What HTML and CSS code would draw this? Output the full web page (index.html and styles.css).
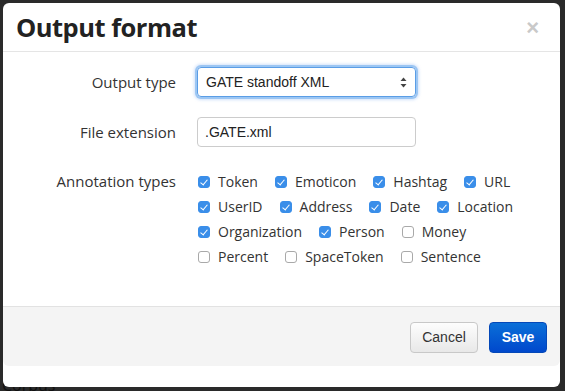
FILE: index.html
```html
<!DOCTYPE html>
<html>
<head>
<meta charset="utf-8">
<link rel="stylesheet" href="styles.css">
</head>
<body>
<div class="backdrop-text">Corpus</div>
<div class="modal">
  <div class="modal-header">
    <h3 class="title">Output format</h3>
    <span class="close">×</span>
  </div>
  <div class="modal-body">
    <div class="form">
      <label class="label">Output type</label>
      <div class="select">
        <span>GATE standoff XML</span>
        <svg class="arrows" width="7" height="11" viewBox="0 0 7 11"><path d="M3.5 0.5 L6.5 4 L0.5 4 Z" fill="#444"/><path d="M3.5 10.5 L6.5 7 L0.5 7 Z" fill="#444"/></svg>
      </div>
      <label class="label">File extension</label>
      <div class="input">.GATE.xml</div>
      <label class="label label-top">Annotation types</label>
      <div class="checks">
        <span class="check"><i class="box on"></i>Token</span>
        <span class="check"><i class="box on"></i>Emoticon</span>
        <span class="check"><i class="box on"></i>Hashtag</span>
        <span class="check"><i class="box on"></i>URL</span>
        <span class="check"><i class="box on"></i>UserID</span>
        <span class="check"><i class="box on"></i>Address</span>
        <span class="check"><i class="box on"></i>Date</span>
        <span class="check"><i class="box on"></i>Location</span>
        <span class="check"><i class="box on"></i>Organization</span>
        <span class="check"><i class="box on"></i>Person</span>
        <span class="check"><i class="box"></i>Money</span>
        <span class="check"><i class="box"></i>Percent</span>
        <span class="check"><i class="box"></i>SpaceToken</span>
        <span class="check"><i class="box"></i>Sentence</span>
      </div>
    </div>
  </div>
  <div class="modal-footer">
    <button class="btn btn-default">Cancel</button>
    <button class="btn btn-primary">Save</button>
  </div>
</div>
</body>
</html>
```
FILE: styles.css
```css
html, body {
  margin: 0;
  padding: 0;
}
body {
  background: #2a2a2a;
  width: 565px;
  height: 391px;
  overflow: hidden;
  position: relative;
  font-family: "Open Sans", sans-serif;
}
.backdrop-text {
  position: absolute;
  left: 2px;
  top: 377px;
  font-size: 16px;
  line-height: 16px;
  color: #111;
}
.modal {
  position: absolute;
  left: 3px;
  top: 3px;
  width: 557px;
  height: 384px;
  background: #fff;
  border-radius: 6px;
  display: flex;
  flex-direction: column;
}
.modal-header {
  height: 48px;
  border-bottom: 1px solid #e5e5e5;
  display: flex;
  align-items: center;
  justify-content: space-between;
  padding: 0 21px 0 13px;
}
.title {
  margin: 0;
  font-family: "Open Sans", sans-serif;
  font-weight: 700;
  font-size: 25.5px;
  color: #222;
  letter-spacing: -0.5px;
  line-height: 1;
  padding-top: 2px;
}
.close {
  font-family: "Liberation Sans", Arial, sans-serif;
  font-size: 22px;
  font-weight: 700;
  color: #c9c9c9;
  line-height: 1;
  margin-top: 2px;
}
.modal-body {
  height: 255px;
  padding: 15px 15px 0 15px;
  box-sizing: border-box;
  border-bottom: 1px solid #e2e2e2;
}
.form {
  display: grid;
  grid-template-columns: 158px 1fr;
  column-gap: 21px;
  row-gap: 20px;
  align-items: center;
}
.label {
  text-align: right;
  font-size: 15px;
  color: #333;
}
.label-top {
  align-self: start;
  line-height: 25px;
  margin-top: 2px;
}
.select {
  width: 219px;
  height: 30px;
  box-sizing: border-box;
  border: 1px solid #5a9de6;
  border-radius: 4px;
  box-shadow: 0 0 0 2px #9cc6f3, 0 0 3px 3px rgba(120, 170, 240, 0.35);
  display: flex;
  align-items: center;
  justify-content: space-between;
  padding: 0 8px 0 8px;
  font-family: "Liberation Sans", Arial, sans-serif;
  font-size: 14px;
  color: #222;
}
.input {
  width: 219px;
  height: 30px;
  box-sizing: border-box;
  border: 1px solid #ccc;
  border-radius: 4px;
  display: flex;
  align-items: center;
  padding: 0 7px;
  font-family: "Liberation Sans", Arial, sans-serif;
  font-size: 14px;
  color: #222;
}
.checks {
  width: 330px;
  display: flex;
  flex-wrap: wrap;
  column-gap: 16px;
  margin-top: 2px;
}
.check {
  display: inline-flex;
  align-items: center;
  height: 25px;
  font-size: 14px;
  color: #333;
}
.box {
  width: 12px;
  height: 12px;
  box-sizing: border-box;
  border: 1px solid #a9a9a9;
  border-radius: 3px;
  background: #fff;
  margin-right: 8px;
  margin-left: 1px;
  display: inline-block;
  position: relative;
}
.box.on {
  background: #3a8ee9;
  border-color: #3a8ee9;
}
.box.on::after {
  content: "";
  position: absolute;
  left: 3px;
  top: 1px;
  width: 3px;
  height: 6px;
  border: solid #fff;
  border-width: 0 1.5px 1.5px 0;
  transform: rotate(40deg);
}
.modal-footer {
  height: 59px;
  background: #f4f4f4;
  border-radius: 0 0 6px 6px;
  display: flex;
  align-items: center;
  justify-content: flex-end;
  padding: 0 13px;
  column-gap: 11px;
}
.btn {
  height: 31px;
  box-sizing: border-box;
  border-radius: 4px;
  font-family: "Liberation Sans", Arial, sans-serif;
  font-size: 14px;
  padding: 0;
  margin-top: 1px;
}
.btn-default {
  width: 68px;
  background: linear-gradient(#fdfdfd, #e8e8e8);
  border: 1px solid #c8c8c8;
  color: #333;
}
.btn-primary {
  width: 58px;
  background: linear-gradient(#0a6fd8, #0048cc);
  border: 1px solid #0448b8;
  color: #fff;
  font-weight: 700;
}
```
